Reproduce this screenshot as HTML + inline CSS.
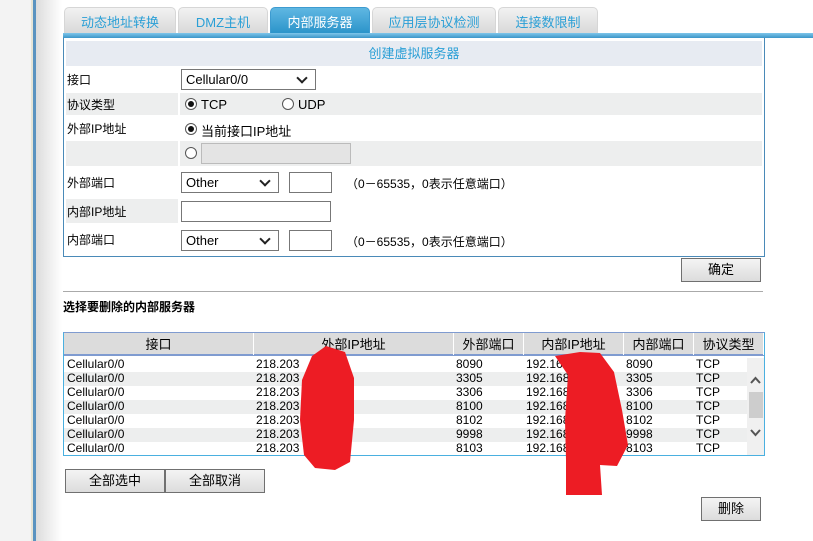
<!DOCTYPE html>
<html><head><meta charset="utf-8"><style>
*{margin:0;padding:0;box-sizing:border-box}
body{width:813px;height:541px;overflow:hidden;background:#fff;font-family:"Liberation Sans","Noto Sans CJK SC",sans-serif;font-size:12px;color:#000;position:relative}
.a{position:absolute}
.tab{position:absolute;top:7px;height:27px;border:1px solid #d6d6d6;border-bottom:none;border-radius:5px 5px 0 0;background:linear-gradient(#f2f2f2,#d8d8d8);color:#2a9fd6;font-size:13px;text-align:center;line-height:30px}
.tab.on{background:linear-gradient(#5fb7e2,#2a93c9);color:#fff;border-color:#3d9bd0}
.row{position:absolute;left:66px;width:696px}
.g{background:#edeeee}
.lab{position:absolute;left:0;top:0;bottom:0;width:112px;padding-left:1px;display:flex;align-items:center}
.sel{position:absolute;border:1px solid #777;background:#fff;height:21px;padding-left:4px;line-height:19px;font-size:13px}
.sel:after{content:"";position:absolute;right:9px;top:4px;width:6px;height:6px;border-right:2px solid #222;border-bottom:2px solid #222;transform:rotate(45deg)}
.inp{position:absolute;border:1px solid #777;background:#fff;height:21px}
.rad{position:absolute;width:12px;height:12px;border:1px solid #555;border-radius:50%;background:#fff}
.rad.on:after{content:"";position:absolute;left:2px;top:2px;width:6px;height:6px;border-radius:50%;background:#111}
.btn{position:absolute;border:1px solid #707070;background:linear-gradient(#f4f4f4,#dcdcdc);text-align:center;font-size:13px;line-height:21px}
.th{position:absolute;top:0;height:22px;line-height:24px;text-align:center;font-size:13px;border-right:1px solid #fff}
.tr{position:absolute;left:0;width:683px;height:14px;line-height:13px;font-size:12px}
.tr span{position:absolute;top:0}
</style></head><body>
<div class="a" style="left:0;top:0;width:31px;height:541px;background:#f3f3f3"></div>
<div class="a" style="left:31px;top:0;width:2px;height:541px;background:#e6e4d6"></div>
<div class="a" style="left:33px;top:0;width:3px;height:541px;background:#5a93c0"></div>
<div class="a" style="left:36px;top:0;width:26px;height:541px;background:linear-gradient(90deg,#dcdcdc,#fff)"></div>

<div class="tab" style="left:64px;width:112px">动态地址转换</div>
<div class="tab" style="left:178px;width:90px">DMZ主机</div>
<div class="tab on" style="left:270px;width:100px">内部服务器</div>
<div class="tab" style="left:372px;width:124px">应用层协议检测</div>
<div class="tab" style="left:498px;width:100px">连接数限制</div>
<div class="a" style="left:63px;top:33px;width:750px;height:5px;background:linear-gradient(#7fc6ea,#3b95c8)"></div>

<div class="a" style="left:63px;top:38px;width:702px;height:219px;border:1px solid #4a8ab8;border-top:none"></div>
<div class="a" style="left:66px;top:41px;width:696px;height:25px;background:#e7ebf2;color:#2a9fd6;font-size:13px;text-align:center;line-height:25px">创建虚拟服务器</div>

<div class="row" style="top:66px;height:27px"><div class="lab">接口</div></div>
<div class="sel" style="left:181px;top:69px;width:135px">Cellular0/0</div>
<div class="row" style="top:93px;height:22px"><div class="lab g" style="width:112px">协议类型</div><div class="g" style="position:absolute;left:114px;right:0;top:0;bottom:0"></div></div>
<div class="rad on" style="left:185px;top:98px"></div><div class="a" style="left:201px;top:97px;font-size:13px">TCP</div>
<div class="rad" style="left:282px;top:98px"></div><div class="a" style="left:298px;top:97px;font-size:13px">UDP</div>
<div class="row" style="top:115px;height:25px"><div class="lab" style="align-items:flex-start;padding-top:5px">外部IP地址</div></div>
<div class="rad on" style="left:185px;top:123px"></div><div class="a" style="left:201px;top:121px;font-size:13px">当前接口IP地址</div>
<div class="row" style="top:141px;height:25px"><div class="lab g"></div><div class="g" style="position:absolute;left:114px;right:0;top:0;bottom:0"></div></div>
<div class="rad" style="left:185px;top:147px"></div>
<div class="a" style="left:201px;top:143px;width:150px;height:21px;border:1px solid #bbb;background:#e4e4e4"></div>
<div class="row" style="top:166px;height:32px"><div class="lab">外部端口</div></div>
<div class="sel" style="left:181px;top:172px;width:98px">Other</div>
<div class="inp" style="left:289px;top:172px;width:43px"></div>
<div class="a" style="left:346px;top:175px;font-size:12px">（0－65535，0表示任意端口）</div>
<div class="row" style="top:199px;height:24px"><div class="lab g">内部IP地址</div></div>
<div class="inp" style="left:181px;top:201px;width:150px"></div>
<div class="row" style="top:223px;height:32px"><div class="lab">内部端口</div></div>
<div class="sel" style="left:181px;top:230px;width:98px">Other</div>
<div class="inp" style="left:289px;top:230px;width:43px"></div>
<div class="a" style="left:346px;top:233px;font-size:12px">（0－65535，0表示任意端口）</div>

<div class="btn" style="left:681px;top:258px;width:80px;height:24px">确定</div>
<div class="a" style="left:63px;top:291px;width:700px;height:1px;background:#aaa"></div>
<div class="a" style="left:63px;top:298px;font-weight:bold;font-size:12px">选择要删除的内部服务器</div>

<div class="a" style="left:63px;top:332px;width:702px;height:124px;border:1px solid #7f9bd0;border-bottom-color:#4ab0e0;border-left-color:#4ab0e0;border-right-color:#4ab0e0;overflow:hidden">
 <div class="a" style="left:0;top:0;width:700px;height:23px;background:#dcdcdc;border-bottom:2px solid #7f9bd0"></div>
 <div class="th" style="left:0;width:190px">接口</div>
 <div class="th" style="left:190px;width:200px">外部IP地址</div>
 <div class="th" style="left:390px;width:70px">外部端口</div>
 <div class="th" style="left:460px;width:100px">内部IP地址</div>
 <div class="th" style="left:560px;width:70px">内部端口</div>
 <div class="th" style="left:630px;width:70px">协议类型</div>
 <div class="a" style="left:0;top:25px;width:700px">
  <div class="tr" style="top:0"><span style="left:3px">Cellular0/0</span><span style="left:192px">218.203</span><span style="left:392px">8090</span><span style="left:462px">192.168.</span><span style="left:562px">8090</span><span style="left:632px">TCP</span></div>
  <div class="tr g" style="top:14px"><span style="left:3px">Cellular0/0</span><span style="left:192px">218.203</span><span style="left:392px">3305</span><span style="left:462px">192.168.</span><span style="left:562px">3305</span><span style="left:632px">TCP</span></div>
  <div class="tr" style="top:28px"><span style="left:3px">Cellular0/0</span><span style="left:192px">218.203</span><span style="left:392px">3306</span><span style="left:462px">192.168.</span><span style="left:562px">3306</span><span style="left:632px">TCP</span></div>
  <div class="tr g" style="top:42px"><span style="left:3px">Cellular0/0</span><span style="left:192px">218.203</span><span style="left:392px">8100</span><span style="left:462px">192.168.</span><span style="left:562px">8100</span><span style="left:632px">TCP</span></div>
  <div class="tr" style="top:56px"><span style="left:3px">Cellular0/0</span><span style="left:192px">218.203</span><span style="left:392px">8102</span><span style="left:462px">192.168.</span><span style="left:562px">8102</span><span style="left:632px">TCP</span></div>
  <div class="tr g" style="top:70px"><span style="left:3px">Cellular0/0</span><span style="left:192px">218.203</span><span style="left:392px">9998</span><span style="left:462px">192.168.</span><span style="left:562px">9998</span><span style="left:632px">TCP</span></div>
  <div class="tr" style="top:84px"><span style="left:3px">Cellular0/0</span><span style="left:192px">218.203</span><span style="left:392px">8103</span><span style="left:462px">192.168.</span><span style="left:562px">8103</span><span style="left:632px">TCP</span></div>
 </div>
 <div class="a" style="left:683px;top:25px;width:17px;height:97px;background:#f0f0f0"></div>
 <div class="a" style="left:685px;top:59px;width:14px;height:26px;background:#cdcdcd"></div>
 <svg class="a" style="left:683px;top:25px" width="17" height="97"><path d="M4 25 L8.5 20 L13 25" fill="none" stroke="#555" stroke-width="2"/><path d="M4 72 L8.5 77 L13 72" fill="none" stroke="#555" stroke-width="2"/></svg>
</div>

<div class="btn" style="left:65px;top:469px;width:100px;height:24px">全部选中</div>
<div class="btn" style="left:165px;top:469px;width:100px;height:24px">全部取消</div>
<div class="btn" style="left:701px;top:497px;width:60px;height:24px">删除</div>

<svg class="a" style="left:0;top:0" width="813" height="541">
<path d="M326 346 L345 352 L354 378 L354 420 L350 462 L335 470 L315 468 L304 455 L300 420 L302 380 L312 356 Z" fill="#ed1c24"/>
<path d="M555 356 L580 352 L600 353 L614 372 L622 410 L628 445 L617 466 L600 465 L602 495 L566 495 L566 460 L565 420 L568 375 Z" fill="#ed1c24"/>
</svg>
</body></html>
